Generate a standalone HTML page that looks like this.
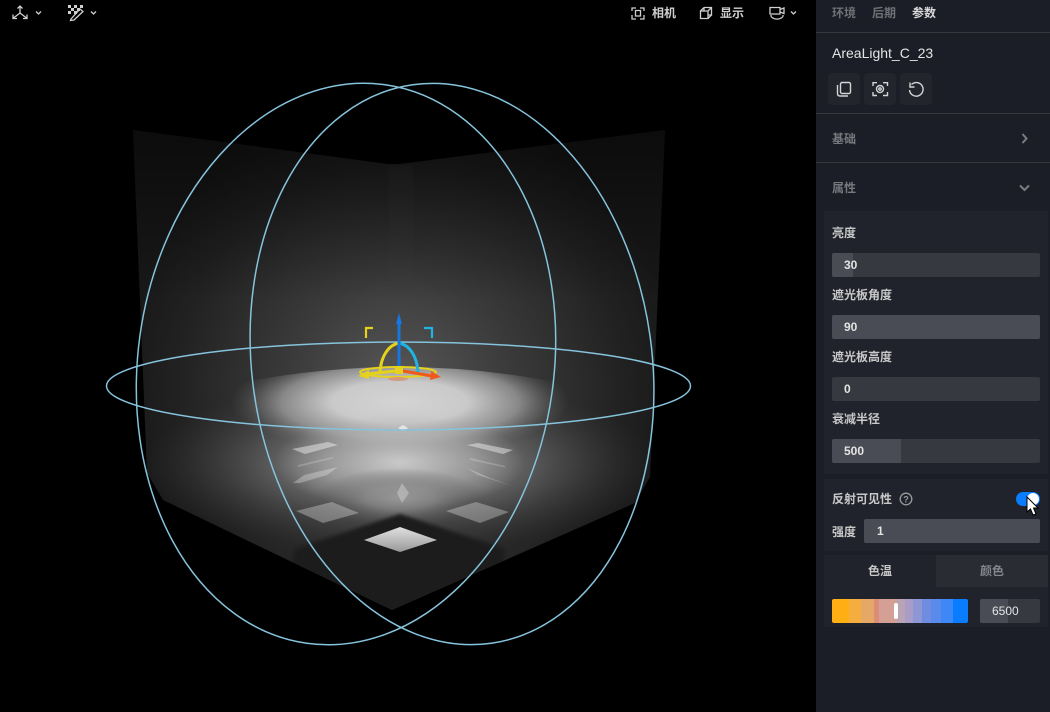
<!DOCTYPE html>
<html><head><meta charset="utf-8"><style>
html,body{margin:0;padding:0;background:#000;width:1050px;height:712px;overflow:hidden}
body{position:relative;font-family:"Liberation Sans","Noto Sans CJK SC",sans-serif}
.a{position:absolute}
.t{position:absolute;font-size:12px;line-height:16px;font-weight:700;white-space:nowrap}
.inp{position:absolute;left:832px;width:208px;height:24px;background:#363940;border-radius:2px;overflow:hidden}
.inp i{position:absolute;left:0;top:0;height:24px;background:#494c54;display:block}
.inp b{position:absolute;left:12px;top:4px;font-size:12px;line-height:16px;color:#e4e4e4;font-weight:700}
.line{position:absolute;left:816px;width:234px;height:1px;background:#35383d}
.btn{position:absolute;top:73px;width:32px;height:32px;background:#22252c;border-radius:4px}
svg{position:absolute;overflow:visible}
</style></head><body>
<svg style="left:0;top:0" width="816" height="712" viewBox="0 0 816 712">
<defs>
<clipPath id="room"><polygon points="133,130 388,164 400,164 665,130 650,477 635,503 392,610 163,500 147,473"/></clipPath>
<clipPath id="floor"><path d="M130 412Q400 322 670 412V620H130Z"/></clipPath>
<radialGradient id="g1" gradientUnits="userSpaceOnUse" cx="400" cy="385" r="280">
<stop offset="0" stop-color="#585858"/><stop offset=".4" stop-color="#3a3a3a"/><stop offset=".8" stop-color="#212121"/><stop offset="1" stop-color="#181818"/></radialGradient>
<radialGradient id="gb"><stop offset="0" stop-color="#d4d4d4"/><stop offset=".4" stop-color="#d0d0d0" stop-opacity=".95"/><stop offset=".7" stop-color="#bbb" stop-opacity=".6"/><stop offset=".9" stop-color="#999" stop-opacity=".15"/><stop offset="1" stop-color="#888" stop-opacity="0"/></radialGradient>
<radialGradient id="gw"><stop offset="0" stop-color="#9a9a9a" stop-opacity=".85"/><stop offset=".4" stop-color="#888" stop-opacity=".65"/><stop offset=".7" stop-color="#666" stop-opacity=".3"/><stop offset="1" stop-color="#444" stop-opacity="0"/></radialGradient>
<radialGradient id="gm"><stop offset="0" stop-color="#d0d0d0" stop-opacity=".9"/><stop offset=".6" stop-color="#bbb" stop-opacity=".5"/><stop offset="1" stop-color="#aaa" stop-opacity="0"/></radialGradient>
<linearGradient id="top" x1="0" y1="0" x2="0" y2="1"><stop offset="0" stop-color="#000" stop-opacity=".55"/><stop offset="1" stop-color="#000" stop-opacity="0"/></linearGradient>
<linearGradient id="dia" x1="0" y1="0" x2="0" y2="1"><stop offset="0" stop-color="#e0e0e0"/><stop offset="1" stop-color="#999"/></linearGradient>
<filter id="b2" x="-10%" y="-10%" width="120%" height="120%"><feGaussianBlur stdDeviation="1.500"/></filter>
</defs>
<g clip-path="url(#room)">
<rect x="120" y="120" width="560" height="500" fill="url(#g1)"/>
<rect x="120" y="120" width="560" height="180" fill="url(#top)"/>
<rect x="388" y="165" width="26" height="190" fill="#444" opacity=".08" filter="url(#b2)"/>
<g clip-path="url(#floor)">
<ellipse cx="400" cy="465" rx="260" ry="85" fill="url(#gw)"/>
<ellipse cx="400" cy="402" rx="170" ry="52" fill="url(#gb)"/>
<ellipse cx="400" cy="462" rx="125" ry="48" fill="url(#gm)"/>
<ellipse cx="400" cy="498" rx="85" ry="30" fill="url(#gw)"/>
</g>
<polygon points="400,514 295,549 290,575 392,620 500,575 505,549" fill="#1d1d1d" filter="url(#b2)"/>
</g>
<polygon points="364,540 400,527 437,540 400,552" fill="url(#dia)"/>
<g fill="#fff">
<polygon points="296,511 332,502 359,513 323,523" opacity=".3"/>
<polygon points="446,511 476,502 509,512 480,523" opacity=".3"/>
<polygon points="292,449 328,442 338,445 305,454" opacity=".42"/>
<polygon points="467,445 478,443 513,450 503,454" opacity=".42"/>
<polygon points="293,483 304,475 338,467 327,475 300,483" opacity=".28"/>
<polygon points="467,468 478,475 512,486 490,478" opacity=".28"/>
<polygon points="298,465 333,457 333,458.500 298,467" opacity=".2"/>
<polygon points="470,458 505,466 505,467.500 470,460" opacity=".2"/>
<polygon points="402,483 409,493 402,503 397,493" opacity=".28"/>
<polygon points="398,428 403,425 408,428 403,431" opacity=".6"/>
</g>
<g fill="none" stroke="#86c3dc" stroke-width="1.500">
<ellipse cx="346" cy="364" rx="208" ry="282" transform="rotate(8 346 364)"/>
<ellipse cx="452" cy="364" rx="200" ry="282" transform="rotate(-8 452 364)"/>
<ellipse cx="398.500" cy="386" rx="292" ry="44"/>
</g>
<g fill="none" stroke-linecap="butt">
<ellipse cx="398" cy="372" rx="38" ry="5" stroke="#e6d21c" stroke-width="2"/>
<path d="M399 343C388 345 381 357 380 372" stroke="#e6d21c" stroke-width="3"/>
<path d="M399 343C410 345 417 357 418 372" stroke="#1fb4e4" stroke-width="3"/>
<path d="M399 368V320" stroke="#1776e0" stroke-width="3"/>
<path d="M403 371L432 376" stroke="#ef5a1c" stroke-width="3"/>
<path d="M395 371L368 374" stroke="#e6d21c" stroke-width="3"/>
<path d="M366 338V328H373" stroke="#e6d21c" stroke-width="2.200"/>
<path d="M424 328H432V338" stroke="#1fb4e4" stroke-width="2.200"/>
</g>
<polygon points="399,313 396,324 402,324" fill="#1776e0"/>
<polygon points="441,377 431,371 430,380" fill="#ef5a1c"/>
<polygon points="358,376 369,370 369,379" fill="#e6d21c"/>
<rect x="395" y="366" width="8" height="8" fill="#e6d21c"/>
<ellipse cx="398" cy="379" rx="10" ry="2" fill="#d49a80"/>
<!-- toolbar icons -->
<g fill="none" stroke="#cfcfcf" stroke-width="1.300">
<path d="M20 6.500V13M20 13L13.500 18M20 13L26.500 18M17.500 8.500L20 6L22.500 8.500M13 14.500V18.500H17M27 14.500V18.500H23"/>
<path d="M36 11.500L38.500 14L41 11.500M91 11.500L93.500 14L96 11.500"/>
<path d="M71 19L80 9L83 11.500L74 20L70.500 20.500Z"/>
<path d="M632 11V8H636M640 8H644V11M632 15V19H636M640 19H644V15M635.500 10.500H640.500V16H635.500Z"/>
<path d="M700.500 11H708V18.500H700.500ZM704 7.500H711.500V15H708M704 7.500V11M700.500 11L704 7.500M708 11L711.500 7.500M708 18.500L711.500 15"/>
<path d="M770 7.500H780V14H770ZM780 9.500L784 8V13.500L780 12M771 16.500C774 20 780 20 783 16.500M771 16.500V15M783 16.500V15"/>
<path d="M791 11.500L793.500 14L796 11.500"/>
</g>
<g fill="#cfcfcf"><rect x="68" y="5" width="3" height="3"/><rect x="74" y="5" width="3" height="3"/><rect x="80" y="5" width="3" height="3"/><rect x="71" y="8" width="3" height="3"/><rect x="77" y="8" width="3" height="3"/><rect x="68" y="11" width="3" height="3"/><rect x="74" y="11" width="3" height="3"/></g>
</svg>
<div class="t" style="left:652px;top:5px;color:#cfcfcf">相机</div>
<div class="t" style="left:720px;top:5px;color:#cfcfcf">显示</div>

<div class="a" style="left:816px;top:0;width:234px;height:712px;background:#1b1e26"></div>
<div class="t" style="left:832px;top:5px;color:#6f7175">环境</div>
<div class="t" style="left:872px;top:5px;color:#6f7175">后期</div>
<div class="t" style="left:912px;top:5px;color:#d8d8d8">参数</div>
<div class="line" style="top:32px"></div>
<div class="a" style="left:832px;top:45px;font-size:14px;line-height:16px;color:#e4e4e4">AreaLight_C_23</div>
<div class="btn" style="left:828px"></div><div class="btn" style="left:864px"></div><div class="btn" style="left:900px"></div>
<svg style="left:0;top:0" width="1050" height="712" fill="none" stroke="#d4d4d4" stroke-width="1.400">
<rect x="840.500" y="82.500" width="10" height="11" rx="1.500"/>
<path d="M837.500 85V93.500Q837.500 96 840 96H848"/>
<path d="M873 86V82.700H877M883 82.700H887.500V86M873 92V95.500H877M883 95.500H887.500V92"/>
<circle cx="880" cy="89" r="3.500"/><circle cx="880" cy="89" r="1.200"/>
<path d="M911.500 84.500A6.800 6.800 0 1 1 909.500 90M910 82.500V87H914.500"/>
<path d="M1022.500 134L1026.500 138.500L1022.500 143" stroke="#7b7d81" stroke-width="2"/>
<path d="M1020 185.500L1024.500 190L1029 185.500" stroke="#7b7d81" stroke-width="2"/>
</svg>
<div class="line" style="top:113px"></div>
<div class="t" style="left:832px;top:131px;color:#77797d">基础</div>
<div class="line" style="top:162px"></div>
<div class="t" style="left:832px;top:180px;color:#77797d">属性</div>

<div class="a" style="left:824px;top:211px;width:224px;height:263px;background:#20232b"></div>
<div class="t" style="left:832px;top:225px;color:#c8c8c8">亮度</div>
<div class="inp" style="top:253px"><i style="width:21px"></i><b>30</b></div>
<div class="t" style="left:832px;top:287px;color:#c8c8c8">遮光板角度</div>
<div class="inp" style="top:315px"><i style="width:208px"></i><b>90</b></div>
<div class="t" style="left:832px;top:349px;color:#c8c8c8">遮光板高度</div>
<div class="inp" style="top:377px"><b>0</b></div>
<div class="t" style="left:832px;top:411px;color:#c8c8c8">衰减半径</div>
<div class="inp" style="top:439px"><i style="width:69px"></i><b>500</b></div>

<div class="a" style="left:824px;top:479px;width:224px;height:72px;background:#20232b"></div>
<div class="t" style="left:832px;top:491px;color:#c8c8c8">反射可见性</div>
<svg style="left:0;top:0" width="1050" height="712" fill="none"><circle cx="906" cy="499" r="5.800" stroke="#9a9a9a" stroke-width="1.300"/><text x="906" y="502.500" font-size="9" font-weight="700" fill="#9a9a9a" text-anchor="middle" font-family="Liberation Sans">?</text></svg>
<div class="a" style="left:1016px;top:492px;width:24px;height:14px;border-radius:7px;background:#0a7cff"></div>
<div class="a" style="left:1027px;top:493px;width:12px;height:12px;border-radius:6px;background:#fff"></div>
<div class="t" style="left:832px;top:524px;color:#c8c8c8">强度</div>
<div class="a" style="left:864px;top:519px;width:176px;height:24px;background:#494c54;border-radius:2px"></div>
<div class="t" style="left:877px;top:523px;color:#e4e4e4">1</div>

<div class="a" style="left:824px;top:555px;width:112px;height:32px;background:#20232b"></div>
<div class="a" style="left:936px;top:555px;width:112px;height:32px;background:#292c33"></div>
<div class="a" style="left:824px;top:587px;width:224px;height:40px;background:#20232b"></div>
<div class="t" style="left:868px;top:563px;color:#c8c8c8">色温</div>
<div class="t" style="left:980px;top:563px;color:#85878b">颜色</div>
<div class="a" style="left:832px;top:599px;width:136px;height:24px;border-radius:2px;background:linear-gradient(90deg,#ffae14 0 17px,#f5ad3e 17px 29px,#e6a866 29px 42px,#db8d78 42px 47px,#d4a096 47px 65px,#b8a4b4 65px 73px,#a99cc8 73px 81px,#8d97d4 81px 90px,#6f8ce0 90px 99px,#5a8aeb 99px 109px,#3d87f7 109px 121px,#0a7cff 121px 136px)"></div>
<div class="a" style="left:894px;top:603px;width:4px;height:16px;border-radius:2px;background:#fff"></div>
<div class="a" style="left:980px;top:599px;width:60px;height:24px;background:#363940;border-radius:2px;overflow:hidden"><div class="a" style="left:0;top:0;width:28px;height:24px;background:#494c54"></div><div class="a" style="left:12px;top:4px;font-size:12px;line-height:16px;color:#e4e4e4">6500</div></div>
<svg style="left:0;top:0" width="1050" height="712"><path d="M1027 497V512L1030.500 509L1033 515L1036 514L1033.500 508H1038Z" fill="#fff" stroke="#000" stroke-width="1"/></svg>
</body></html>
